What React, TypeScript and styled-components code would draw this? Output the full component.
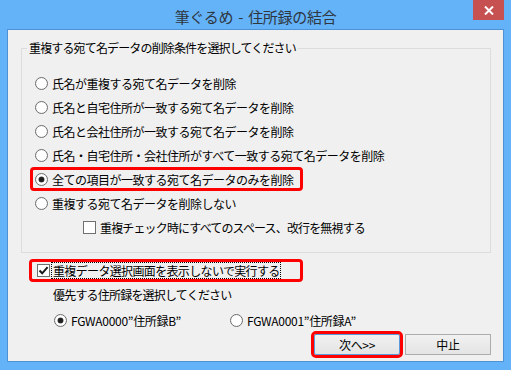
import React from 'react';
import styled, { createGlobalStyle, css } from 'styled-components';

const Global = createGlobalStyle`
  html, body { margin: 0; padding: 0; }
  body {
    width: 511px; height: 370px; overflow: hidden; background: #64B2F8;
    font-family: "Noto Sans CJK JP", "Noto Sans", sans-serif;
  }
`;

const Window = styled.div`
  position: relative;
  width: 511px; height: 370px; box-sizing: border-box;
  background: #64B2F8;
  display: flex; flex-direction: column;
  padding: 0 7px 8px;
`;

const TitleBar = styled.div`
  height: 29px; box-sizing: border-box; padding-top: 3px;
  display: flex; align-items: center; justify-content: center;
  font-size: 15px; color: #2e3640; letter-spacing: -0.3px; word-spacing: 2px;
`;

const CloseButton = styled.div`
  position: absolute; top: 0; right: 7px;
  width: 31px; height: 20px;
  background: #C75050;
  display: flex; align-items: center; justify-content: center;
`;

const Client = styled.div`
  flex: 1;
  background: #F0F0F0;
  border: 1px solid #4C92D4;
  display: flex; flex-direction: column;
  padding: 10px 12px 0 13px;
  color: #000;
`;

const Group = styled.fieldset`
  margin: 0; min-width: 0;
  padding: 15px 0 13px 13px;
  border: 1px solid #DCDCDC;
`;

const Legend = styled.legend`
  padding: 0 2px; margin-left: -8px;
  font-size: 12px; line-height: 16px; letter-spacing: -0.85px;
`;

const Rows = styled.div`
  display: flex; flex-direction: column;
`;

const Row = styled.label<{ $indent?: number; $highlight?: boolean; $tight?: boolean }>`
  display: flex; align-items: center; gap: 4px;
  height: 24px;
  font-size: 12px; letter-spacing: ${p => (p.$tight ? -0.85 : -0.5)}px; white-space: nowrap;
  padding-left: ${p => p.$indent ?? 0}px;
  ${p => p.$highlight && css`
    box-sizing: border-box;
    width: 273px; margin-left: -5px; padding-left: 5px;
    outline: 3px solid #FF0000; outline-offset: -3px; border-radius: 4px;
  `}
`;

const RadioMark = styled.span<{ $checked?: boolean }>`
  position: relative; flex: none;
  width: 13px; height: 13px; box-sizing: border-box;
  border-radius: 50%;
  border: 1px solid #6E6E6E;
  background: radial-gradient(circle at 50% 50%, #FFFFFF 0 55%, #E6E6E6 100%);
  ${p => p.$checked && css`
    &::after {
      content: ""; position: absolute; left: 3px; top: 3px;
      width: 5px; height: 5px; border-radius: 50%;
      background: #1E1E1E;
      box-shadow: 0 0 0 0.5px #555;
    }
  `}
`;

const CheckMark = styled.span`
  flex: none; display: flex; align-items: center; justify-content: center;
  width: 13px; height: 13px; box-sizing: border-box;
  border: 1px solid #707070; background: #FFFFFF;
`;

const Bottom = styled.div`
  display: flex; flex-direction: column;
  padding-top: 6px;
`;

const ExecRow = styled.label`
  display: flex; align-items: center; gap: 1px;
  box-sizing: border-box;
  height: 23px; width: 274px;
  margin-left: 8px; padding-left: 8px;
  outline: 3px solid #FF0000; outline-offset: -3px; border-radius: 4px;
  font-size: 12px; letter-spacing: -0.65px; white-space: nowrap;
`;

const FocusText = styled.span`
  border: 1px dotted #000; padding: 0 0 0 1px; line-height: 15px;
`;

const Caption = styled.div`
  height: 24px; display: flex; align-items: center;
  padding-left: 32px;
  font-size: 12px; letter-spacing: -0.8px;
`;

const Choices = styled.div`
  height: 28px; display: grid; grid-template-columns: 176px auto;
  align-items: center; padding-left: 33px;
`;

const Choice = styled.label`
  display: flex; align-items: center; gap: 4px;
  font-size: 12px; letter-spacing: -0.3px; white-space: nowrap;
`;

const Buttons = styled.div`
  display: flex; justify-content: flex-end; gap: 5px;
`;

const Button = styled.button<{ $default?: boolean }>`
  width: 86px; height: 21px; box-sizing: border-box; padding: 0;
  font-family: inherit; font-size: 12px; color: #000; letter-spacing: -0.3px;
  background: linear-gradient(#F1F1F1, #E4E4E4);
  border: 1px solid #ACACAC;
  ${p => p.$default && css`
    border-color: #5A9BDA;
    outline: 3px solid #FF0000; outline-offset: 0; border-radius: 2px;
  `}
`;

const Radio = ({ checked, children, indent, highlight }: { checked?: boolean; children: React.ReactNode; indent?: number; highlight?: boolean }) => (
  <Row $indent={indent} $highlight={highlight}>
    <RadioMark $checked={checked} />
    <span>{children}</span>
  </Row>
);

const Check = () => (
  <svg width="11" height="11" viewBox="0 0 11 11">
    <path d="M1.5 5.5 L4.2 8.3 L9.6 2.2" fill="none" stroke="#1A1A1A" strokeWidth="2" />
  </svg>
);

export default function App() {
  return (
    <>
      <Global />
      <Window>
        <TitleBar>筆ぐるめ - 住所録の結合</TitleBar>
        <CloseButton>
          <svg width="10" height="9" viewBox="0 0 10 9">
            <path d="M1 0.5 L9 8.5 M9 0.5 L1 8.5" stroke="#FFFFFF" strokeWidth="2" />
          </svg>
        </CloseButton>
        <Client>
          <Group>
            <Legend>重複する宛て名データの削除条件を選択してください</Legend>
            <Rows>
              <Radio>氏名が重複する宛て名データを削除</Radio>
              <Radio>氏名と自宅住所が一致する宛て名データを削除</Radio>
              <Radio>氏名と会社住所が一致する宛て名データを削除</Radio>
              <Radio>氏名・自宅住所・会社住所がすべて一致する宛て名データを削除</Radio>
              <Radio checked highlight>全ての項目が一致する宛て名データのみを削除</Radio>
              <Radio>重複する宛て名データを削除しない</Radio>
              <Row $indent={48} $tight>
                <CheckMark />
                <span>重複チェック時にすべてのスペース、改行を無視する</span>
              </Row>
            </Rows>
          </Group>
          <Bottom>
            <ExecRow>
              <CheckMark><Check /></CheckMark>
              <FocusText>重複データ選択画面を表示しないで実行する</FocusText>
            </ExecRow>
            <Caption>優先する住所録を選択してください</Caption>
            <Choices>
              <Choice><RadioMark $checked />FGWA0000”住所録B”</Choice>
              <Choice><RadioMark />FGWA0001”住所録A”</Choice>
            </Choices>
            <Buttons>
              <Button $default>次へ&gt;&gt;</Button>
              <Button>中止</Button>
            </Buttons>
          </Bottom>
        </Client>
      </Window>
    </>
  );
}
